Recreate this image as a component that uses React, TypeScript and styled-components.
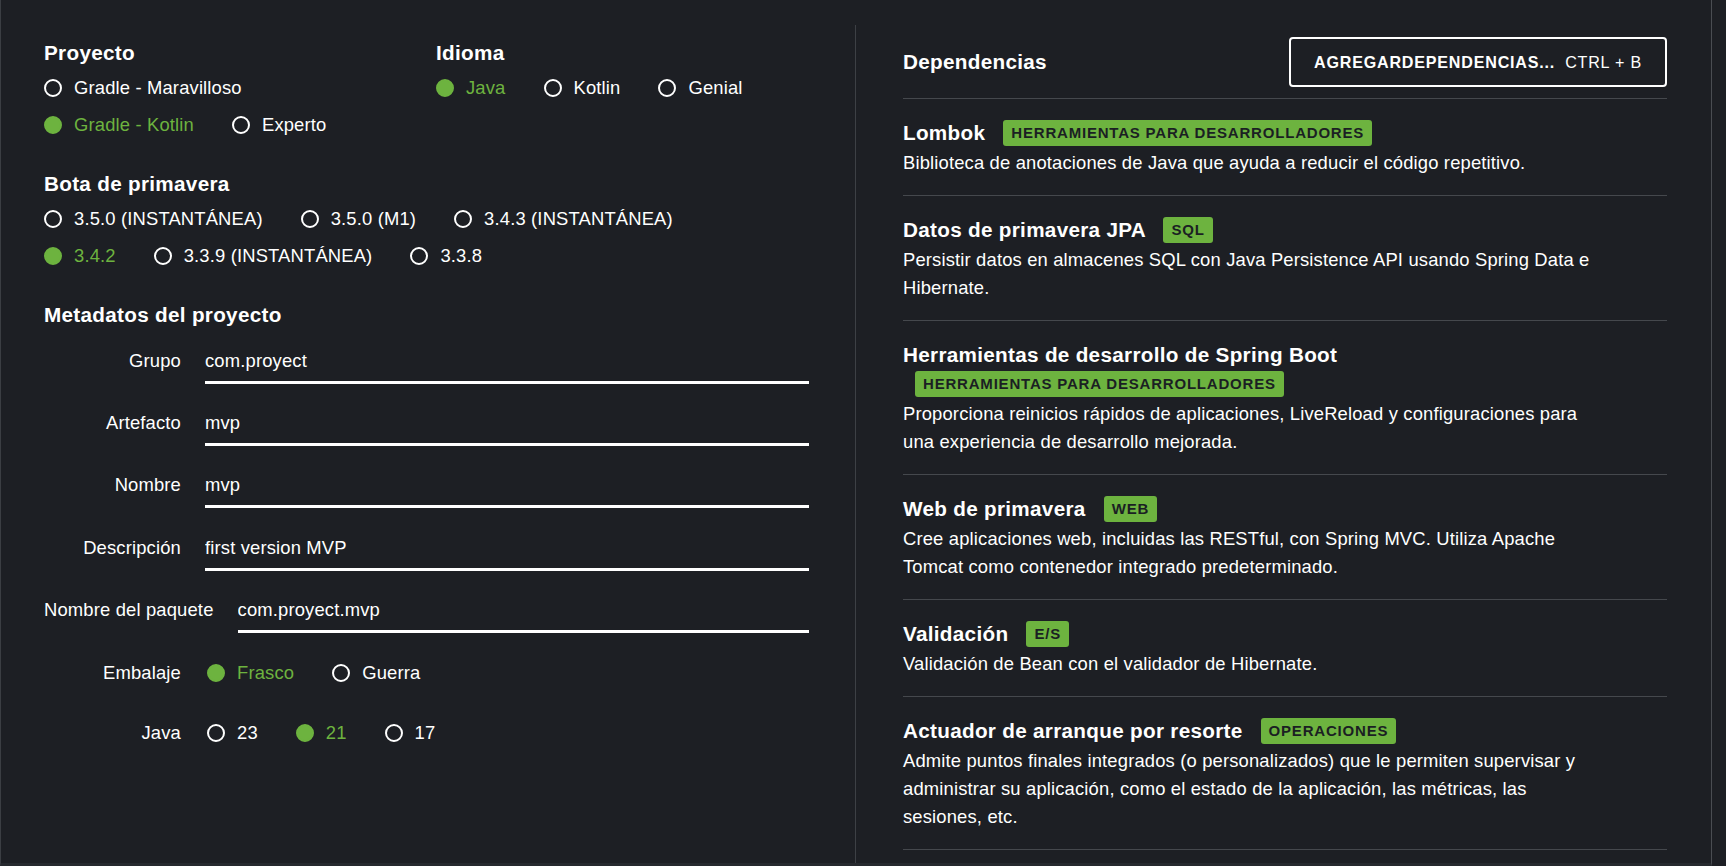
import styled, { createGlobalStyle } from "styled-components";

const GREEN = "#6db33f";

const GlobalStyle = createGlobalStyle`
  html, body {
    margin: 0;
    padding: 0;
    overflow: hidden;
    background: #1d1f24;
  }
  body {
    font-family: "Liberation Sans", Arial, sans-serif;
    font-size: 18.4px;
    letter-spacing: 0.16px;
    color: #fff;
  }
`;

const Frame = styled.div`
  width: 1712px;
  height: 866px;
  box-sizing: border-box;
  border-left: 1px solid #3b3e43;
  border-right: 1px solid #4a4d52;
  border-bottom: 3px solid #26292e;
  display: grid;
  grid-template-columns: 854px 856px;
`;

const LeftPane = styled.div`
  padding: 40px 46px 0 43px;
`;

const RightPane = styled.div`
  margin-top: 25px;
  border-left: 1px solid #3d4045;
  padding: 12px 44px 0 47px;
`;

const TopGrid = styled.div`
  display: grid;
  grid-template-columns: 373px 373px;
  column-gap: 19px;
  margin-bottom: 32.5px;
`;

const Section = styled.div`
  margin-bottom: 32.5px;
`;

const SectionTitle = styled.h2<{ $gap?: number }>`
  margin: 0 0 ${(p) => p.$gap ?? 8}px;
  font-size: 20.7px;
  line-height: 26px;
  font-weight: bold;
  letter-spacing: 0.3px;
  color: #fff;
`;

const RadioGroup = styled.div<{ $max?: number }>`
  display: flex;
  flex-wrap: wrap;
  gap: 8.5px 38px;
  max-width: ${(p) => (p.$max ? `${p.$max}px` : "none")};
`;

const RadioItem = styled.label<{ $on?: boolean }>`
  display: flex;
  align-items: center;
  line-height: 28px;
  white-space: nowrap;
  color: ${(p) => (p.$on ? GREEN : "#fff")};
  cursor: pointer;
`;

const Dot = styled.span<{ $on?: boolean }>`
  width: 18px;
  height: 18px;
  box-sizing: border-box;
  border-radius: 50%;
  margin-right: 12px;
  border: 2px solid ${(p) => (p.$on ? GREEN : "#fff")};
  background: ${(p) => (p.$on ? GREEN : "transparent")};
`;

const Fields = styled.div`
  display: flex;
  flex-direction: column;
  gap: 25.2px;
`;

const FieldRow = styled.div<{ $shift?: number }>`
  display: flex;
  align-items: flex-start;
  gap: 24px;
  margin-top: ${(p) => p.$shift ?? 0}px;
`;

const FieldLabel = styled.span`
  min-width: 137px;
  text-align: right;
  line-height: 28px;
  white-space: nowrap;
`;

const TextInput = styled.input`
  flex: 1;
  min-width: 0;
  height: 28px;
  padding: 0 0 6px;
  margin: 0;
  border: none;
  border-bottom: 3px solid #fff;
  background: transparent;
  color: #fff;
  font: inherit;
  letter-spacing: inherit;
  line-height: 28px;
  outline: none;
`;

const InlineRadios = styled(RadioGroup)`
  margin-left: 2px;
`;

const Header = styled.div`
  display: flex;
  align-items: center;
  justify-content: space-between;
  padding-bottom: 11px;
  border-bottom: 1px solid #45484d;
`;

const HeaderTitle = styled.h2`
  margin: 0;
  font-size: 20.7px;
  font-weight: bold;
  letter-spacing: 0.3px;
`;

const AddButton = styled.button`
  width: 378px;
  height: 50px;
  display: flex;
  align-items: center;
  justify-content: center;
  background: transparent;
  border: 2px solid #fff;
  border-radius: 4px;
  color: #fff;
  font-family: inherit;
  font-size: 16.1px;
  font-weight: bold;
  letter-spacing: 0.8px;
  cursor: pointer;
`;

const Shortcut = styled.span`
  margin-left: 10px;
  font-weight: normal;
`;

const DepItem = styled.div`
  padding: 19px 0 18.5px;
  border-bottom: 1px solid #45484d;
`;

const DepTitle = styled.div`
  font-size: 20.7px;
  font-weight: bold;
  letter-spacing: 0.3px;
  line-height: 29px;
`;

const Badge = styled.span`
  display: inline-block;
  margin-left: 12px;
  padding: 0 8px;
  height: 26px;
  line-height: 26px;
  vertical-align: 2px;
  border-radius: 3px;
  background: ${GREEN};
  color: #1b1f23;
  font-size: 15px;
  font-weight: bold;
  letter-spacing: 0.8px;
  white-space: nowrap;
`;

const DepText = styled.p`
  margin: 1.5px 0 0;
  max-width: 700px;
  line-height: 28px;
`;

type Opt = { label: string; on?: boolean };

function Radios({ items, max }: { items: Opt[]; max?: number }) {
  return (
    <RadioGroup $max={max}>
      {items.map((o) => (
        <RadioItem key={o.label} $on={o.on}>
          <Dot $on={o.on} />
          {o.label}
        </RadioItem>
      ))}
    </RadioGroup>
  );
}

const fields = [
  { label: "Grupo", value: "com.proyect" },
  { label: "Artefacto", value: "mvp" },
  { label: "Nombre", value: "mvp" },
  { label: "Descripción", value: "first version MVP" },
  { label: "Nombre del paquete", value: "com.proyect.mvp" },
];

const deps = [
  {
    name: "Lombok",
    tag: "HERRAMIENTAS PARA DESARROLLADORES",
    text: "Biblioteca de anotaciones de Java que ayuda a reducir el código repetitivo.",
  },
  {
    name: "Datos de primavera JPA",
    tag: "SQL",
    text: "Persistir datos en almacenes SQL con Java Persistence API usando Spring Data e Hibernate.",
  },
  {
    name: "Herramientas de desarrollo de Spring Boot",
    tag: "HERRAMIENTAS PARA DESARROLLADORES",
    text: "Proporciona reinicios rápidos de aplicaciones, LiveReload y configuraciones para una experiencia de desarrollo mejorada.",
  },
  {
    name: "Web de primavera",
    tag: "WEB",
    text: "Cree aplicaciones web, incluidas las RESTful, con Spring MVC. Utiliza Apache Tomcat como contenedor integrado predeterminado.",
  },
  {
    name: "Validación",
    tag: "E/S",
    text: "Validación de Bean con el validador de Hibernate.",
  },
  {
    name: "Actuador de arranque por resorte",
    tag: "OPERACIONES",
    text: "Admite puntos finales integrados (o personalizados) que le permiten supervisar y administrar su aplicación, como el estado de la aplicación, las métricas, las sesiones, etc.",
  },
];

export default function App() {
  return (
    <>
      <GlobalStyle />
      <Frame>
        <LeftPane>
          <TopGrid>
            <div>
              <SectionTitle>Proyecto</SectionTitle>
              <Radios
                items={[
                  { label: "Gradle - Maravilloso" },
                  { label: "Gradle - Kotlin", on: true },
                  { label: "Experto" },
                ]}
              />
            </div>
            <div>
              <SectionTitle>Idioma</SectionTitle>
              <Radios
                items={[{ label: "Java", on: true }, { label: "Kotlin" }, { label: "Genial" }]}
              />
            </div>
          </TopGrid>

          <Section>
            <SectionTitle>Bota de primavera</SectionTitle>
            <Radios
              max={680}
              items={[
                { label: "3.5.0 (INSTANTÁNEA)" },
                { label: "3.5.0 (M1)" },
                { label: "3.4.3 (INSTANTÁNEA)" },
                { label: "3.4.2", on: true },
                { label: "3.3.9 (INSTANTÁNEA)" },
                { label: "3.3.8" },
              ]}
            />
          </Section>

          <Section>
            <SectionTitle $gap={19}>Metadatos del proyecto</SectionTitle>
            <Fields>
              {fields.map((f) => (
                <FieldRow key={f.label}>
                  <FieldLabel>{f.label}</FieldLabel>
                  <TextInput defaultValue={f.value} />
                </FieldRow>
              ))}
              <FieldRow $shift={1.5}>
                <FieldLabel>Embalaje</FieldLabel>
                <InlineRadios>
                  <RadioItem $on>
                    <Dot $on />
                    Frasco
                  </RadioItem>
                  <RadioItem>
                    <Dot />
                    Guerra
                  </RadioItem>
                </InlineRadios>
              </FieldRow>
              <FieldRow $shift={6}>
                <FieldLabel>Java</FieldLabel>
                <InlineRadios>
                  <RadioItem>
                    <Dot />
                    23
                  </RadioItem>
                  <RadioItem $on>
                    <Dot $on />
                    21
                  </RadioItem>
                  <RadioItem>
                    <Dot />
                    17
                  </RadioItem>
                </InlineRadios>
              </FieldRow>
            </Fields>
          </Section>
        </LeftPane>

        <RightPane>
          <Header>
            <HeaderTitle>Dependencias</HeaderTitle>
            <AddButton>
              AGREGARDEPENDENCIAS...
              <Shortcut>CTRL + B</Shortcut>
            </AddButton>
          </Header>
          {deps.map((d) => (
            <DepItem key={d.name}>
              <DepTitle>
                {d.name}{" "}
                <Badge>{d.tag}</Badge>
              </DepTitle>
              <DepText>{d.text}</DepText>
            </DepItem>
          ))}
        </RightPane>
      </Frame>
    </>
  );
}
